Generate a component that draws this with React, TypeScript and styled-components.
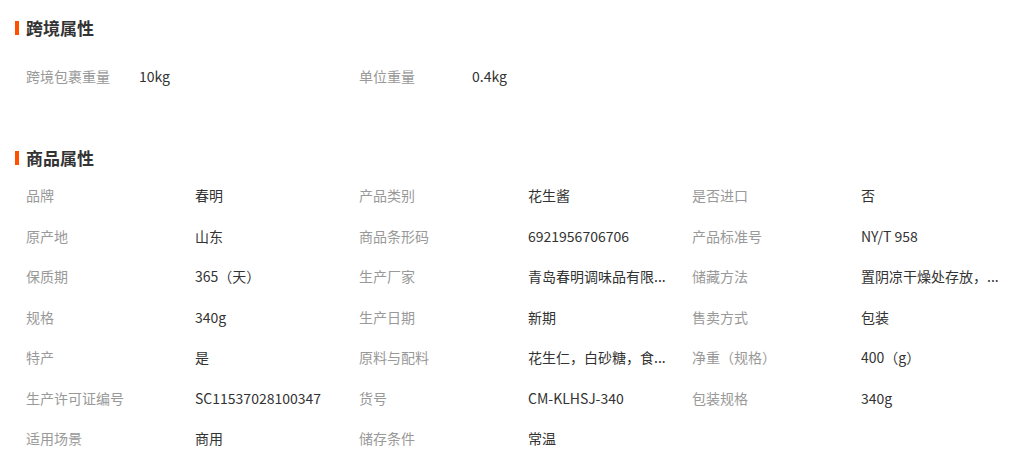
import styled, { createGlobalStyle } from "styled-components";

const GlobalStyle = createGlobalStyle`
  body {
    margin: 0;
    background: #fff;
    font-family: "Noto Sans CJK SC", "Liberation Sans", sans-serif;
    font-size: 14px;
    color: #333;
  }
`;

const Page = styled.div`
  padding: 18px 0 0 15px;
  width: 1019px;
  box-sizing: border-box;
`;

const Section = styled.section<{ $gap?: number }>`
  margin-bottom: ${(p) => p.$gap ?? 0}px;
`;

const Title = styled.h3`
  display: flex;
  align-items: center;
  margin: 0;
  height: 20px;
  font-size: 17px;
  font-weight: bold;
  color: #333;
  line-height: 20px;

  &::before {
    content: "";
    width: 4px;
    height: 14px;
    margin-right: 7px;
    background: #ff5000;
  }
`;

const CrossRow = styled.div`
  display: grid;
  grid-template-columns: repeat(2, 113px 220px);
  margin: 18px 0 0 11px;
  height: 40px;
  align-items: center;
`;

const Grid = styled.div`
  display: grid;
  grid-template-columns: repeat(3, 169px 164px);
  grid-auto-rows: 40.5px;
  align-items: center;
  margin: 7px 0 0 11px;
`;

const Label = styled.span`
  color: #999;
  white-space: nowrap;
`;

const Value = styled.span`
  color: #333;
  white-space: nowrap;
`;

const cross: [string, string][] = [
  ["跨境包裹重量", "10kg"],
  ["单位重量", "0.4kg"],
];

// values are already shortened the way the page shows them
const attrs: [string, string][] = [
  ["品牌", "春明"],
  ["产品类别", "花生酱"],
  ["是否进口", "否"],
  ["原产地", "山东"],
  ["商品条形码", "6921956706706"],
  ["产品标准号", "NY/T 958"],
  ["保质期", "365（天）"],
  ["生产厂家", "青岛春明调味品有限..."],
  ["储藏方法", "置阴凉干燥处存放，..."],
  ["规格", "340g"],
  ["生产日期", "新期"],
  ["售卖方式", "包装"],
  ["特产", "是"],
  ["原料与配料", "花生仁，白砂糖，食..."],
  ["净重（规格）", "400（g）"],
  ["生产许可证编号", "SC11537028100347"],
  ["货号", "CM-KLHSJ-340"],
  ["包装规格", "340g"],
  ["适用场景", "商用"],
  ["储存条件", "常温"],
];

export default function App() {
  return (
    <Page>
      <GlobalStyle />
      <Section $gap={52}>
        <Title>跨境属性</Title>
        <CrossRow>
          {cross.map(([k, v]) => [
            <Label key={k}>{k}</Label>,
            <Value key={k + "v"}>{v}</Value>,
          ])}
        </CrossRow>
      </Section>
      <Section>
        <Title>商品属性</Title>
        <Grid>
          {attrs.map(([k, v]) => [
            <Label key={k}>{k}</Label>,
            <Value key={k + "v"}>{v}</Value>,
          ])}
        </Grid>
      </Section>
    </Page>
  );
}
